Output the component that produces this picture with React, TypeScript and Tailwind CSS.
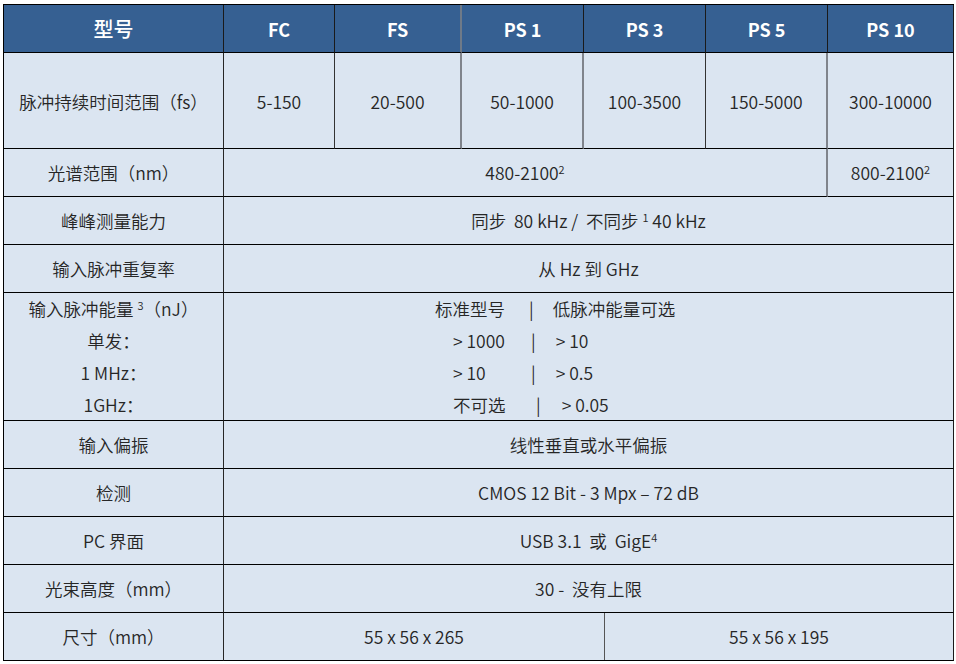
import React from "react";

const FONT = "[font-family:'Noto_Sans_CJK_SC','Noto_Sans',sans-serif]";

function Cell({
  className = "",
  children,
}: {
  className?: string;
  children?: React.ReactNode;
}) {
  return (
    <div
      className={
        "flex items-center justify-center border-b border-b-black text-center whitespace-pre " +
        className
      }
    >
      {children}
    </div>
  );
}

const Sup = ({ children }: { children: React.ReactNode }) => (
  <sup className="text-[11px]">{children}</sup>
);

const headSep = [
  "border-r border-r-[#1a1a1a]",
  "border-r border-r-[#1a1a1a]",
  "border-r-2 border-r-[#6f7a88]",
  "border-r border-r-[#1a1a1a]",
  "border-r border-r-[#1a1a1a]",
  "border-r border-r-[#1a1a1a]",
  "border-r border-r-[#1a1a1a]",
];

const bodySep = [
  "border-r border-r-[#262626]",
  "border-r border-r-[#333333]",
  "border-r-2 border-r-[#80848c]",
  "border-r-2 border-r-[#80848c]",
  "border-r border-r-[#333333]",
  "border-r-2 border-r-[#80848c]",
  "border-r border-r-[#1a1a1a]",
];

const ROW = "h-[48px] bg-[#dbe5f1]";
const LABEL = ROW + " border-r border-r-[#262626]";
const WIDE = ROW + " col-span-6 border-r border-r-[#1a1a1a]";

export default function App() {
  const heads = ["型号", "FC", "FS", "PS 1", "PS 3", "PS 5", "PS 10"];
  const durations = [
    "脉冲持续时间范围（fs）",
    "5-150",
    "20-500",
    "50-1000",
    "100-3500",
    "150-5000",
    "300-10000",
  ];
  return (
    <div className={"bg-white w-[956px] h-[664px] pt-[4px] pl-[3px] " + FONT}>
      <div className="grid w-fit grid-cols-[220px_111px_127px_122px_122px_122px_126px] border-l border-t border-black text-[17.5px] font-[350] leading-[24px] text-[#262626]">
        {heads.map((h, i) => (
          <Cell
            key={h}
            className={
              "h-[48px] bg-[#366092] text-white " +
              (i === 0 ? "text-[20px] font-medium " : "text-[18px] font-bold ") +
              headSep[i]
            }
          >
            {h}
          </Cell>
        ))}

        {durations.map((d, i) => (
          <Cell key={d} className={"h-[96px] pt-[2px] bg-[#dbe5f1] " + bodySep[i]}>
            {d}
          </Cell>
        ))}

        <Cell className={LABEL}>光谱范围（nm）</Cell>
        <Cell className={ROW + " col-span-5 border-r-2 border-r-[#80848c]"}>
          <span>
            480-2100<Sup>2</Sup>
          </span>
        </Cell>
        <Cell className={ROW + " border-r border-r-[#1a1a1a]"}>
          <span>
            800-2100<Sup>2</Sup>
          </span>
        </Cell>

        <Cell className={LABEL}>峰峰测量能力</Cell>
        <Cell className={WIDE}>
          <span>
            {"同步  80 kHz /  不同步 "}
            <Sup>1</Sup>
            {" 40 kHz"}
          </span>
        </Cell>

        <Cell className={LABEL}>输入脉冲重复率</Cell>
        <Cell className={WIDE}>从 Hz 到 GHz</Cell>

        <Cell className="h-[128px] bg-[#dbe5f1] border-r border-r-[#262626] flex-col leading-[32px]">
          <div>
            {"输入脉冲能量 "}
            <Sup>3</Sup>
            {"（nJ）"}
          </div>
          <div>单发：</div>
          <div>1 MHz：</div>
          <div>1GHz：</div>
        </Cell>
        <div className="col-span-6 flex h-[128px] flex-col justify-center border-b border-r border-b-black border-r-[#1a1a1a] bg-[#dbe5f1] leading-[32px] whitespace-pre">
          <div className="flex pl-[211px]">
            <span className="w-[94px]">标准型号</span>
            <span>|</span>
            <span className="ml-[19px]">低脉冲能量可选</span>
          </div>
          <div className="flex pl-[229px]">
            <span className="w-[78px]">{"> 1000"}</span>
            <span>|</span>
            <span className="ml-[20px]">{"> 10"}</span>
          </div>
          <div className="flex pl-[229px]">
            <span className="w-[78px]">{"> 10"}</span>
            <span>|</span>
            <span className="ml-[20px]">{"> 0.5"}</span>
          </div>
          <div className="flex pl-[229px]">
            <span className="w-[83px]">不可选</span>
            <span>|</span>
            <span className="ml-[21px]">{"> 0.05"}</span>
          </div>
        </div>

        <Cell className={LABEL}>输入偏振</Cell>
        <Cell className={WIDE}>线性垂直或水平偏振</Cell>

        <Cell className={LABEL}>检测</Cell>
        <Cell className={WIDE}>CMOS 12 Bit - 3 Mpx – 72 dB</Cell>

        <Cell className={LABEL}>PC 界面</Cell>
        <Cell className={WIDE}>
          <span>
            {"USB 3.1  或  GigE"}
            <Sup>4</Sup>
          </span>
        </Cell>

        <Cell className={LABEL}>光束高度（mm）</Cell>
        <Cell className={WIDE}>{"30 -  没有上限"}</Cell>

        <Cell className={LABEL}>尺寸（mm）</Cell>
        <div className="col-span-6 grid h-[48px] grid-cols-[381px_1fr] border-b border-r border-b-black border-r-[#1a1a1a] bg-[#dbe5f1]">
          <div className="flex items-center justify-center border-r border-r-[#555555]">
            55 x 56 x 265
          </div>
          <div className="flex items-center justify-center">55 x 56 x 195</div>
        </div>
      </div>
    </div>
  );
}
